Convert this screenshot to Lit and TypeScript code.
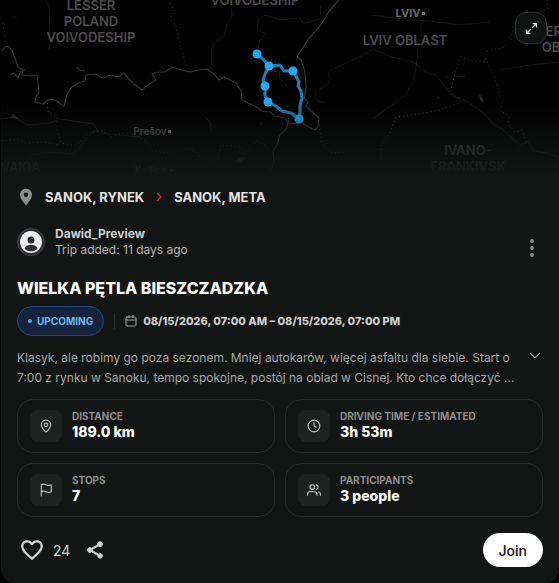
import { LitElement, html, svg, css } from "lit";
import { customElement, property, state } from "lit/decorators.js";

const borders = [
  "M2 51 L5 47 L8 46 L12 50 L14 56 L16 61 L18 67 L23 70 L22 75 L30 76 L37 75 L38 82 L39 92 L36 97 L35 102 L43 104 L49 99 L55 100 L64 106 L67 94 L71 88 L78 83 L85 81 L86 75 L95 74 L103 78 L110 75 L118 77 L124 73 L129 79 L134 84 L142 90 L148 85 L156 80 L152 74 L158 72 L165 72 L172 67 L181 70 L190 72 L199 70 L207 69 L214 74 L219 80 L224 77 L236 83 L241 91 L242 100 L250 104 L257 107 L261 111 L270 112 L275 116 L285 118 L289 124 L302 123 L309 127 L315 130 L318 127 L319 118 L311 111 L306 106 L308 102 L304 98 L306 88 L305 72 L301 60 L297 57 L302 49 L309 38 L320 26 L330 10 L339 0",
  "M10 75 L14 73 L18 78 L20 72 L25 70 M77 67 L80 70 L85 71",
  "M289 118 L287 128 L280 135 L277 145 L273 151 L274 162 L270 172",
];

const rivers = [
  "M46 0 L50 10 L49 29 L52 40 L49 49 M231 8 L232 15 L227 25 L224 36 L213 44 L211 51 L212 70",
  "M258 48 L260 40 L265 34 L257 29 L258 20 L265 15 L275 18 L282 20 L300 18 L303 24 L320 19 L321 5",
  "M326 103 L317 101 L315 93 L328 84 L330 79 L328 74 L331 70 L350 61 L363 55 L373 49 L392 57 L415 63 L425 72 L436 75 L444 86 L453 96 L466 101 L474 106 L485 114 L492 123 L502 129 L511 137 L520 145 L529 141 L533 151 L548 153 L559 157",
  "M421 22 L421 35 L418 48 L417 60 L414 80 L405 96 L390 106 L373 119",
  "M370 15 L405 19 L430 21 L460 25 L490 22 M445 77 L465 76 M500 70 L530 65 L559 62",
  "M0 119 L15 117 L27 125 L50 123 L60 119 L80 122 L93 124 L100 133 L120 135 L140 137 M30 155 L48 152 L73 154 L84 142 L92 132 L98 130",
  "M205 117 L210 122 L211 130 M272 71 L279 72 L280 79 L286 85 L285 88 M261 122 L261 125",
];

const districts = [
  "M170 3 L175 12 L170 19 L176 26 L178 36 L180 46 L184 57 L186 67",
  "M47 99 L48 112 L57 117 L57 130 L61 143 L76 146 L88 133 L102 131 L112 137 L122 133 L137 135 L146 142 L153 151 L172 154 L183 147 L196 152 L204 161 L217 162 L221 145 L238 146 L247 151 L257 141 L270 149",
  "M2 141 L17 139 L25 143 L43 142 L60 145",
  "M382 170 L381 145 L390 133 L396 117 L418 114 L440 110 L460 103 L460 99 L450 93 L455 74 L460 57 L472 61 L484 62 L487 51 L502 48 L511 40 L513 26",
  "M487 62 L496 81 L500 97 L503 100 L500 110 L509 117 L508 124 L515 132 L522 130 L526 142 L535 150 L559 158",
  "M319 125 L322 143 L330 153 L343 152 L354 163 L371 169",
  "M3 23 L5 36 M14 16 L18 18",
  "M547 0 L548 9 L540 12",
];

const places: Array<[number, number, string, string]> = [
  [91, 10, "region", "LESSER"],
  [91, 26, "region", "POLAND"],
  [91, 42, "region", "VOIVODESHIP"],
  [255, 5, "region", "VOIVODESHIP"],
  [405, 45, "region", "LVIV OBLAST"],
  [468, 155, "region", "IVANO-"],
  [468, 171, "region", "FRANKIVSK"],
  [569, 36, "region", "TERNOPIL"],
  [568, 52, "region", "OBLAST"],
  [8, 172, "region", "SLOVAKIA"],
  [408, 17, "city", "LVIV"],
  [150, 135, "town", "Prešov"],
  [151, 174, "town", "Košice"],
];

const stops = [
  [257, 54],
  [269, 66],
  [293, 71],
  [265, 86],
  [268, 102],
  [299, 119],
];

const line = (body: unknown) =>
  html`<svg viewBox="0 0 24 24" fill="none" stroke="currentColor" stroke-width="2" stroke-linecap="round" stroke-linejoin="round" aria-hidden="true">${body}</svg>`;

const icons = {
  distance: line(svg`<path d="M20 10c0 5-5.500 10.200-7.400 11.800a1 1 0 0 1-1.200 0C9.500 20.200 4 15 4 10a8 8 0 0 1 16 0"/><circle cx="12" cy="10" r="3"/>`),
  time: line(svg`<circle cx="12" cy="12" r="10"/><path d="M12 6v6l4 2"/>`),
  stops: line(svg`<path d="M4 22V3s1-1 4-1 5 2 8 2 5-1 5-1v12s-2 1-5 1-5-2-8-2-4 1-4 1"/>`),
  people: line(svg`<path d="M17 21v-2a4 4 0 0 0-4-4H5a4 4 0 0 0-4 4v2"/><circle cx="9" cy="7" r="4"/><path d="M23 21v-2a4 4 0 0 0-3-3.870M16 3.130a4 4 0 0 1 0 7.750"/>`),
  calendar: line(svg`<path d="M8 1v4M16 1v4"/><rect x="2" y="4" width="20" height="18" rx="2"/><path d="M2 10h20"/>`),
  chevronDown: line(svg`<path d="m4 9 8 8 8-8"/>`),
  expand: line(svg`<path d="M15 3h6v6M21 3l-7 7M9 21H3v-6M3 21l7-7"/>`),
};

@customElement("trip-map")
class TripMap extends LitElement {
  static styles = css`
    :host { display: block; position: relative; height: 175px; background: #000; overflow: hidden; }
    .canvas { display: block; width: 100%; height: 100%; }
    .border { fill: none; stroke: #343434; stroke-width: 1.2; stroke-linejoin: round; }
    .river { fill: none; stroke: #171717; stroke-width: 1; }
    .district { fill: none; stroke: #3a3a3a; stroke-width: 1; stroke-dasharray: 1 3; }
    .lake { fill: #292929; }
    .region { font: 600 13px Inter, sans-serif; fill: #4c4c4c; text-anchor: middle; }
    .city { font: 700 11px Inter, sans-serif; fill: #686868; text-anchor: middle; }
    .town { font: 600 10px Inter, sans-serif; fill: #5c5c5c; text-anchor: middle; }
    .route { fill: none; stroke: #1f7fb5; stroke-width: 3; stroke-linejoin: round; stroke-linecap: round; }
    .stop { fill: #24a9f2; }
    .mark { fill: #777; }
    .fade { position: absolute; inset: auto 0 0; height: 75px; background: linear-gradient(transparent, #131514); }
    .expand {
      position: absolute; top: 12px; right: 12px; width: 32px; height: 32px; padding: 0;
      display: grid; place-items: center; border-radius: 11px;
      border: 1px solid #303231; background: #101211; color: #f2f2f2; cursor: pointer;
    }
    .expand svg { width: 13px; height: 13px; }
  `;

  render() {
    return html`
      <svg class="canvas" viewBox="1 0 558 175" preserveAspectRatio="xMidYMin slice" role="img" aria-label="Route map">
        ${rivers.map((d) => svg`<path class="river" d=${d} />`)}
        ${districts.map((d) => svg`<path class="district" d=${d} />`)}
        ${borders.map((d) => svg`<path class="border" d=${d} />`)}
        <path class="lake" d="M10 118l3-4 6 5zM234 163l5-5 7-1-5 5zM479 94l3 3 2 6-4-3zM436 96l4 2-1 1z" />
        ${places.map(([x, y, kind, name]) => svg`<text class=${kind} x=${x} y=${y}>${name}</text>`)}
        <path class="mark" d="M422 12h3v3h-3zM168 130h3v3h-3zM170 169h3v3h-3z" />
        <path class="route" d="M257 54L263 59L269 66L280 65L284 71L293 71L296 76L299 82L298 86L301 91L302 98L300 105L300 112L299 119L291 113L282 111L276 106L268 102L265 96L265 86L263 80L265 74L269 66" />
        ${stops.map(([x, y]) => svg`<circle class="stop" cx=${x} cy=${y} r="4.5" />`)}
      </svg>
      <div class="fade"></div>
      <button class="expand" aria-label="Expand map">${icons.expand}</button>
    `;
  }
}

@customElement("stat-card")
class StatCard extends LitElement {
  @property() label = "";
  @property() value = "";
  @property({ attribute: false }) icon: unknown;

  static styles = css`
    :host { display: flex; align-items: center; gap: 10px; padding: 10px 12px; border: 1px solid #292b2a; border-radius: 16px; }
    .tile { display: grid; place-items: center; flex: none; width: 32px; height: 32px; border-radius: 8px; background: #1f2120; color: #bdbdbd; }
    .tile svg { display: block; width: 14px; height: 14px; }
    .label { font-size: 10px; line-height: 12px; font-weight: 700; color: #8c8e8d; text-transform: uppercase; }
    .value { font-size: 14px; line-height: 20px; font-weight: 800; color: #fff; }
  `;

  render() {
    return html`
      <div class="tile">${this.icon}</div>
      <div>
        <div class="label">${this.label}</div>
        <div class="value">${this.value}</div>
      </div>
    `;
  }
}

@customElement("app-root")
class AppRoot extends LitElement {
  @state() private expanded = false;

  static styles = css`
    :host { display: block; background: #000; padding-left: 1px; font-family: Inter, "Liberation Sans", sans-serif; color: #e6e6e6; }
    .card { background: #131514; border-radius: 0 0 16px 16px; overflow: hidden; }
    .body { display: flex; flex-direction: column; padding: 12px 16px 17px; }
    button { font-family: inherit; padding: 0; border: 0; background: none; color: inherit; cursor: pointer; }
    svg { display: block; flex: none; }

    .route { display: flex; align-items: center; height: 20px; font-size: 13px; font-weight: 700; color: #e4e4e4; }
    .pin { width: 18px; height: 18px; margin-right: 10px; fill: #8c8c8c; }
    .arrow { width: 10px; height: 10px; margin: 0 10px; color: #d02a3c; stroke-width: 3; }

    .author { display: flex; align-items: center; gap: 10px; margin-top: 18px; }
    .avatar { width: 28px; height: 28px; }
    .who { flex: 1; font-size: 12px; line-height: 16px; color: #b4b4b4; }
    .name { font-weight: 700; color: #cfcfcf; }
    .menu { width: 22px; margin-top: 12px; }
    .menu svg { width: 22px; height: 22px; fill: #8c8c8c; }

    .title { margin: 17px 0 0; font-size: 16px; line-height: 24px; font-weight: 800; color: #fff; }
    .when { display: flex; align-items: center; gap: 10px; margin-top: 6px; font-size: 11px; font-weight: 800; color: #cfcfcf; }
    .status { display: flex; align-items: center; gap: 5px; height: 30px; box-sizing: border-box; padding: 0 10px; border: 1px solid #1d4a86; border-radius: 15px; background: #15233c; color: #6cb4f5; font-size: 10px; font-weight: 700; }
    .dot { width: 4px; height: 4px; border-radius: 50%; background: #58a6f0; }
    .rule { width: 1px; height: 16px; background: #2d2f2e; }
    .date { display: flex; align-items: center; gap: 6px; }
    .date svg { width: 12px; height: 12px; color: #a0a0a0; }

    .about { display: flex; gap: 10px; margin-top: 12px; }
    .text { flex: 1; margin: 0; font-size: 12px; line-height: 20px; color: #a5a5a5; }
    .more { display: grid; justify-items: center; width: 16px; height: 16px; color: #a5a5a5; }
    .more svg { width: 14px; height: 14px; }

    .stats { display: grid; grid-template-columns: 1fr 1fr; gap: 10px; margin-top: 11px; }

    .actions { display: flex; align-items: center; margin-top: 16px; color: #d4d4d4; }
    .like { display: flex; align-items: center; gap: 8px; margin-left: 2px; font-size: 14px; }
    .like svg { width: 26px; height: 26px; fill: currentColor; }
    .share { margin-left: 15px; }
    .share svg { width: 20px; height: 20px; fill: currentColor; }
    .join { margin-left: auto; height: 34px; padding: 0 16px; border-radius: 17px; background: #fff; color: #111; font-size: 14px; font-weight: 500; }
  `;

  render() {
    return html`
      <article class="card">
        <trip-map></trip-map>
        <div class="body">
          <div class="route">
            <svg class="pin" viewBox="0 0 24 24" aria-hidden="true"><path fill-rule="evenodd" d="M12 1C7.600 1 4 4.500 4 9c0 6 8 14 8 14s8-8 8-14c0-4.500-3.600-8-8-8m0 5a3 3 0 1 1 0 6 3 3 0 0 1 0-6"/></svg>
            <span>SANOK, RYNEK</span>
            <svg class="arrow" viewBox="0 0 24 24" fill="none" stroke="currentColor" aria-hidden="true"><path d="m7 2 10 10L7 22"/></svg>
            <span>SANOK, META</span>
          </div>

          <div class="author">
            <svg class="avatar" viewBox="0 0 28 28" aria-hidden="true">
              <circle cx="14" cy="14" r="13.500" fill="#2c2c30" stroke="#46464a"/>
              <circle cx="14" cy="14" r="11" fill="#eee"/>
              <circle cx="14" cy="12" r="3.500" fill="#2c2c30"/>
              <path d="M7.500 20.500c1.500-5 11.500-5 13 0-3.500 3.800-9.500 3.800-13 0" fill="#2c2c30"/>
            </svg>
            <div class="who">
              <div class="name">Dawid_Preview</div>
              <div>Trip added: 11 days ago</div>
            </div>
            <button class="menu" aria-label="More options">
              <svg viewBox="0 0 22 22"><circle cx="11" cy="4" r="2"/><circle cx="11" cy="11" r="2"/><circle cx="11" cy="18" r="2"/></svg>
            </button>
          </div>

          <h2 class="title">WIELKA PĘTLA BIESZCZADZKA</h2>

          <div class="when">
            <span class="status"><span class="dot"></span>UPCOMING</span>
            <span class="rule"></span>
            <span class="date">${icons.calendar}<span>08/15/2026, 07:00 AM – 08/15/2026, 07:00 PM</span></span>
          </div>

          <div class="about">
            <p class="text">Klasyk, ale robimy go poza sezonem. Mniej autokarów, więcej asfaltu dla siebie. Start o 7:00 z rynku w Sanoku, tempo spokojne, postój na obiad w Cisnej. Kto chce dołączyć ...</p>
            <button class="more" aria-label="Show full description" aria-expanded=${this.expanded} @click=${() => (this.expanded = !this.expanded)}>${icons.chevronDown}</button>
          </div>

          <div class="stats">
            <stat-card label="Distance" value="189.0 km" .icon=${icons.distance}></stat-card>
            <stat-card label="Driving time / estimated" value="3h 53m" .icon=${icons.time}></stat-card>
            <stat-card label="Stops" value="7" .icon=${icons.stops}></stat-card>
            <stat-card label="Participants" value="3 people" .icon=${icons.people}></stat-card>
          </div>

          <div class="actions">
            <button class="like" aria-label="Like, 24 likes">
              <svg viewBox="0 0 24 24"><path d="M16.500 3c-1.740 0-3.410.81-4.500 2.090C10.910 3.810 9.240 3 7.500 3 4.420 3 2 5.420 2 8.500c0 3.780 3.400 6.860 8.550 11.540L12 21.350l1.450-1.320C18.600 15.360 22 12.280 22 8.500 22 5.420 19.580 3 16.500 3m-4.400 15.550-.1.100-.1-.1C7.140 14.240 4 11.390 4 8.500 4 6.500 5.500 5 7.500 5c1.540 0 3.040.990 3.570 2.360h1.870C13.460 5.990 14.960 5 16.500 5c2 0 3.500 1.500 3.500 3.500 0 2.890-3.140 5.740-7.900 10.050"/></svg>
              <span>24</span>
            </button>
            <button class="share" aria-label="Share">
              <svg viewBox="0 0 24 24"><path d="M18 16.080c-.76 0-1.440.3-1.960.77L8.910 12.700c.05-.23.090-.46.090-.7s-.04-.47-.09-.7l7.050-4.110c.54.500 1.250.81 2.040.81 1.660 0 3-1.340 3-3s-1.340-3-3-3-3 1.340-3 3c0 .24.040.47.090.700L8.040 9.810C7.500 9.310 6.790 9 6 9c-1.660 0-3 1.340-3 3s1.340 3 3 3c.79 0 1.500-.31 2.040-.81l7.120 4.160c-.05.210-.08.430-.08.650 0 1.610 1.310 2.920 2.920 2.920s2.920-1.310 2.920-2.920-1.310-2.920-2.920-2.920" stroke="currentColor"/></svg>
            </button>
            <button class="join">Join</button>
          </div>
        </div>
      </article>
    `;
  }
}
